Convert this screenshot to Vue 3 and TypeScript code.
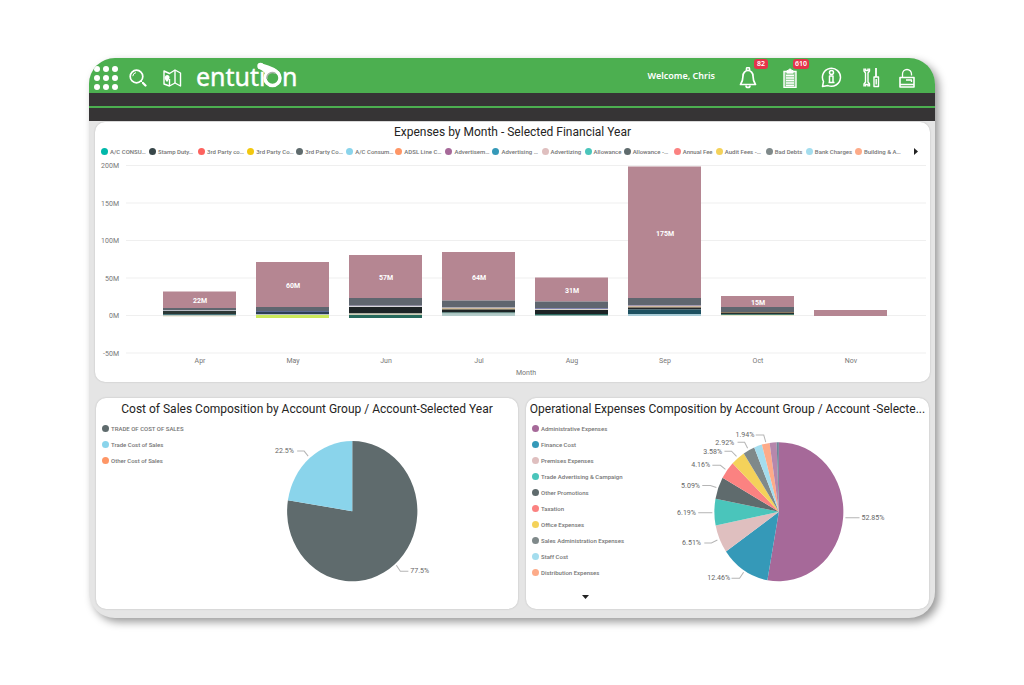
<script setup lang="ts">
interface Item { label: string; color: string }
interface Segment { color: string; top: number; height: number }
interface Bar { month: string; label: string; labelY: number; segments: Segment[] }
interface Slice { value: number; color: string }
interface Callout { text: string; x: number; y: number; points: string }

const accounts: Item[] = [
  { label: 'A/C CONSU…', color: '#01b8aa' },
  { label: 'Stamp Duty…', color: '#374649' },
  { label: '3rd Party co…', color: '#fd625e' },
  { label: '3rd Party Co…', color: '#f2c80f' },
  { label: '3rd Party Co…', color: '#5f6b6d' },
  { label: 'A/C Consum…', color: '#8ad4eb' },
  { label: 'ADSL Line C…', color: '#fe9666' },
  { label: 'Advertisem…', color: '#a66999' },
  { label: 'Advertising …', color: '#3599b8' },
  { label: 'Advertizing', color: '#dfbfbf' },
  { label: 'Allowance', color: '#4ac5bb' },
  { label: 'Allowance -…', color: '#5f6b6d' },
  { label: 'Annual Fee', color: '#fb8281' },
  { label: 'Audit Fees -…', color: '#f4d25a' },
  { label: 'Bad Debts', color: '#7f898a' },
  { label: 'Bank Charges', color: '#a4ddee' },
  { label: 'Building & A…', color: '#fdab89' },
]

const salesGroups: Item[] = [
  { label: 'TRADE OF COST OF SALES', color: '#5f6b6d' },
  { label: 'Trade Cost of Sales', color: '#8ad4eb' },
  { label: 'Other Cost of Sales', color: '#fe9666' },
]

const expenseGroups: Item[] = [
  { label: 'Administrative Expenses', color: '#a66999' },
  { label: 'Finance Cost', color: '#3599b8' },
  { label: 'Premises Expenses', color: '#dfbfbf' },
  { label: 'Trade Advertising & Campaign', color: '#4ac5bb' },
  { label: 'Other Promotions', color: '#5f6b6d' },
  { label: 'Taxation', color: '#fb8281' },
  { label: 'Office Expenses', color: '#f4d25a' },
  { label: 'Sales Administration Expenses', color: '#7f898a' },
  { label: 'Staff Cost', color: '#a4ddee' },
  { label: 'Distribution Expenses', color: '#fdab89' },
]

const ticks = ['200M', '150M', '100M', '50M', '0M', '-50M']
const tickY = (i: number) => 9.5 + i * 37.5

const stack = (top: number, parts: [string, number][]): Segment[] => {
  let y = top
  return parts.map(([color, height]) => {
    const s = { color, top: y, height }
    y += height
    return s
  })
}

const rose = '#b58692'
const slate = '#5f666f'
const bars: Bar[] = [
  { month: 'Apr', label: '22M', labelY: 144, segments: stack(135.5, [[rose, 16.5], [slate, 2], ['#b9bcc4', 1], ['#2c3836', 3], ['#49757a', 1.5], ['#e6dfc8', 1]]) },
  { month: 'May', label: '60M', labelY: 129, segments: stack(106, [[rose, 45], [slate, 4], ['#5b6a93', 1], ['#2c3f55', 2], ['#b9c2c6', 1], ['#cbe95a', 3]]) },
  { month: 'Jun', label: '57M', labelY: 121, segments: stack(99, [[rose, 43], [slate, 7], ['#8d8ca0', 1], ['#d8d8dc', 1], ['#1d2426', 6.5], ['#cdd0b8', 1.5], ['#276a5d', 3]]) },
  { month: 'Jul', label: '64M', labelY: 121, segments: stack(96, [[rose, 48.5], [slate, 7], ['#a9a4b4', 1], ['#c8a45a', 1], ['#1d2426', 3], ['#3c7a70', 1], ['#b3cbc9', 2.5]]) },
  { month: 'Aug', label: '31M', labelY: 134, segments: stack(121.5, [[rose, 24], [slate, 6.5], ['#8084b0', 1], ['#d8d2c8', 1], ['#1d2426', 4], ['#2c6a60', 1.5]]) },
  { month: 'Sep', label: '175M', labelY: 77, segments: stack(10.5, [[rose, 131.5], [slate, 7.5], ['#9a86b0', 1], ['#d6b070', 1], ['#24282b', 2], ['#1d5060', 4.5], ['#a8cbd6', 2]]) },
  { month: 'Oct', label: '15M', labelY: 146, segments: stack(140, [[rose, 11], [slate, 5], ['#8d7a60', 1], ['#26302f', 1], ['#4d8274', 1], ['#e6e6cc', 1]]) },
  { month: 'Nov', label: '', labelY: 0, segments: stack(154, [[rose, 6]]) },
]
const barX = (i: number) => 68 + i * 93

const wedges = (slices: Slice[], cx: number, cy: number, rx: number, ry: number) => {
  const total = slices.reduce((sum, s) => sum + s.value, 0)
  let turn = 0
  const at = (t: number) => {
    const a = t * 2 * Math.PI
    return `${(cx + rx * Math.sin(a)).toFixed(2)} ${(cy - ry * Math.cos(a)).toFixed(2)}`
  }
  return slices.map((s) => {
    const from = turn
    turn += s.value / total
    const large = turn - from > 0.5 ? 1 : 0
    return { color: s.color, d: `M${cx} ${cy}L${at(from)}A${rx} ${ry} 0 ${large} 1 ${at(turn)}Z` }
  })
}

const salesPie = wedges([{ value: 77.5, color: '#5f6b6d' }, { value: 22.5, color: '#8ad4eb' }], 120, 91, 65, 70)
const salesCallouts: Callout[] = [
  { text: '22.5%', x: 43, y: 33, points: '65,31 72,31 76,36' },
  { text: '77.5%', x: 178, y: 153, points: '164,145 168,151 176,151' },
]

const expensePie = wedges([
  { value: 52.85, color: '#a66999' },
  { value: 12.46, color: '#3599b8' },
  { value: 6.51, color: '#dfbfbf' },
  { value: 6.19, color: '#4ac5bb' },
  { value: 5.09, color: '#5f6b6d' },
  { value: 4.16, color: '#fb8281' },
  { value: 3.58, color: '#f4d25a' },
  { value: 2.92, color: '#7f898a' },
  { value: 2, color: '#a4ddee' },
  { value: 1.94, color: '#fdab89' },
  { value: 1.75, color: '#b687ac' },
  { value: 0.55, color: '#6e8598' },
], 110, 91, 64, 69)
const expenseCallouts: Callout[] = [
  { text: '1.94%', x: 67, y: 17, points: '87,15 95,15 97,22' },
  { text: '2.92%', x: 47, y: 25, points: '69,22 76,22 79,28' },
  { text: '3.58%', x: 35, y: 34, points: '56,31 63,31 68,36' },
  { text: '4.16%', x: 23, y: 47, points: '44,45 52,45 57,49' },
  { text: '5.09%', x: 13, y: 67, points: '34,65 42,65 48,67' },
  { text: '6.19%', x: 9, y: 94, points: '30,92 44,92' },
  { text: '6.51%', x: 14, y: 124, points: '36,122 43,122 49,119' },
  { text: '12.46%', x: 39, y: 159, points: '63,157 71,157 75,151' },
  { text: '52.85%', x: 192, y: 99, points: '176,97 190,97' },
]
</script>

<template>
  <div class="page">
    <div class="frame">
      <header class="topbar">
        <button class="icon apps" aria-label="Apps">
          <svg width="26" height="26" viewBox="0 0 26 26">
            <g v-for="r in 3" :key="r">
              <circle v-for="c in 3" :key="c" :cx="c * 9 - 5" :cy="r * 9 - 5" r="3" fill="#fff" />
            </g>
          </svg>
        </button>
        <button class="icon search" aria-label="Search">
          <svg width="18" height="18" viewBox="0 0 18 18" fill="none" stroke="#fff">
            <circle cx="7.5" cy="7.5" r="6.3" stroke-width="1.7" />
            <path d="M3.8 7.2A4 4 0 0 1 7 3.6M12 12l2 2" stroke-width="1" />
            <path d="M14 14l2.500 2.500" stroke-width="2.2" stroke-linecap="round" />
          </svg>
        </button>
        <button class="icon map" aria-label="Map">
          <svg width="19" height="18" viewBox="0 0 19 18" fill="none" stroke="#fff" stroke-width="1.400" stroke-linejoin="round">
            <path d="M1 2L6.500 4.500L12 1L17.500 4V17L12 14L6.500 17L1 15Z" />
            <path d="M6.500 10v7M12 1v13" />
            <path d="M4 12C2.500 10 2 9 2.500 8a1.800 1.800 0 0 1 3.400 0c.3 1-.4 2-1.900 4z" fill="#fff" />
          </svg>
        </button>
        <svg class="logo" width="106" height="40" viewBox="0 -4 106 40" role="img" aria-label="entution">
          <text x="0" y="26" class="wordmark">entutı</text>
          <text x="86" y="26" class="wordmark">n</text>
          <path d="M62 8.500Q67 10 69.500 14L84 13Q80 7 66 3.500Z" fill="#fff" />
          <circle cx="64.500" cy="6" r="3.200" fill="#fff" />
          <circle cx="76.500" cy="18" r="7.500" fill="#4caf50" stroke="#fff" stroke-width="3.500" />
          <path d="M71 19A5.500 5.500 0 0 1 79.500 13.500" fill="none" stroke="#a9b5aa" stroke-width="1.500" />
        </svg>
        <span class="welcome">Welcome, Chris</span>
        <nav class="tools">
          <button class="icon" aria-label="Notifications">
            <svg width="18" height="22" viewBox="0 0 18 22" fill="none" stroke="#fff" stroke-width="1.700" stroke-linejoin="round">
              <path d="M1.500 17.500Q4 14 4 9a5 5.500 0 0 1 10 0Q14 14 16.500 17.500z" />
              <path d="M7.500 3.500V2a1.500 1.500 0 0 1 3 0v1.500M7 18.500a2 2 0 0 0 4 0" />
            </svg>
            <span class="badge">82</span>
          </button>
          <button class="icon" aria-label="Tasks">
            <svg width="14" height="20" viewBox="0 0 14 20">
              <path d="M1 3.500H13V19.500H1z" fill="#fff" fill-opacity=".35" stroke="#fff" stroke-width="1.400" />
              <path d="M4 5V2.500H5.500a1.500 1.500 0 0 1 3 0H10V5z" fill="#fff" stroke="#fff" />
              <path d="M3 7.500h8M3 10h8M3 12.500h8M3 15h8M3 17.500h8" stroke="#fff" stroke-width="1.300" />
            </svg>
            <span class="badge wide">610</span>
          </button>
          <button class="icon" aria-label="Information">
            <svg width="21" height="21" viewBox="0 0 21 21" fill="none" stroke="#fff" stroke-width="1.500" stroke-linejoin="round">
              <path d="M1.500 19.500l1-5A9 9 0 1 1 7 18.600z" />
              <circle cx="10.500" cy="5.500" r="2" />
              <path d="M8.500 9H12v6.500H8.500zM7.500 15.500h6" />
            </svg>
          </button>
          <button class="icon" aria-label="Settings">
            <svg width="17" height="21" viewBox="0 0 17 21" fill="none" stroke="#fff" stroke-width="1.400" stroke-linejoin="round">
              <path d="M1 1.500V4l1.500 2v9L1 17v2.500M6.500 1.500V4L5 6v9l1.500 2v2.500M2.500 1.500v2h2.500v-2M2.500 19.500v-2H5v2" />
              <path d="M13 1v9" stroke-width="1.800" />
              <path d="M11 10h4.500v9.500H11zM13.200 12v5.500" />
            </svg>
          </button>
          <button class="icon" aria-label="Unlock">
            <svg width="16" height="20" viewBox="0 0 16 20" fill="none" stroke="#fff" stroke-width="1.600" stroke-linejoin="round">
              <path d="M1 9.500h14V19H1z" />
              <path d="M3.500 9V6a4.500 4.500 0 0 1 9 0v1.500M1 16.500h14M7 12h5.500v2" stroke-width="1.300" />
            </svg>
          </button>
        </nav>
      </header>
      <div class="strip"></div>

      <main class="board">
        <section class="card monthly">
          <h2>Expenses by Month - Selected Financial Year</h2>
          <div class="legend-row">
            <ul>
              <li v-for="(a, i) in accounts" :key="i">
                <svg class="dot" viewBox="0 0 6 6"><circle cx="3" cy="3" r="3" :fill="a.color" /></svg>{{ a.label }}
              </li>
            </ul>
            <button class="pager" aria-label="Next accounts">
              <svg width="4" height="7" viewBox="0 0 4 7"><path d="M0 0L4 3.500L0 7z" fill="#222" /></svg>
            </button>
          </div>
          <svg class="chart" viewBox="0 4 835 222" role="img" aria-label="Expenses by month">
            <g v-for="(t, i) in ticks" :key="t">
              <line x1="31" x2="831" :y1="tickY(i)" :y2="tickY(i)" stroke="#efefef" />
              <text x="24" :y="tickY(i) + 2.5" class="axis end">{{ t }}</text>
            </g>
            <g v-for="(b, i) in bars" :key="b.month">
              <rect v-for="(s, k) in b.segments" :key="k" :x="barX(i)" :y="s.top" width="73" :height="s.height" :fill="s.color" />
              <text :x="barX(i) + 37" :y="b.labelY + 2.5" class="value">{{ b.label }}</text>
              <text :x="barX(i) + 37" y="207" class="axis mid">{{ b.month }}</text>
            </g>
            <text x="431" y="219" class="axis mid">Month</text>
          </svg>
        </section>

        <div class="pair">
          <section class="card sales">
            <h2>Cost of Sales Composition by Account Group / Account-Selected Year</h2>
            <div class="split">
              <ul class="legend-col">
                <li v-for="g in salesGroups" :key="g.label">
                  <svg class="dot" viewBox="0 0 6 6"><circle cx="3" cy="3" r="3" :fill="g.color" /></svg>{{ g.label }}
                </li>
              </ul>
              <svg class="pie" viewBox="0 0 240 180" role="img" aria-label="Cost of sales composition">
                <path v-for="(w, i) in salesPie" :key="i" :d="w.d" :fill="w.color" />
                <g v-for="c in salesCallouts" :key="c.text">
                  <polyline :points="c.points" class="leader" />
                  <text :x="c.x" :y="c.y" class="percent">{{ c.text }}</text>
                </g>
              </svg>
            </div>
          </section>

          <section class="card expenses">
            <h2>Operational Expenses Composition by Account Group / Account -Selecte...</h2>
            <div class="split">
              <div class="legend-side">
                <ul class="legend-col">
                  <li v-for="g in expenseGroups" :key="g.label">
                    <svg class="dot" viewBox="0 0 6 6"><circle cx="3" cy="3" r="3" :fill="g.color" /></svg>{{ g.label }}
                  </li>
                </ul>
                <button class="pager" aria-label="More groups">
                  <svg width="7" height="4" viewBox="0 0 7 4"><path d="M0 0H7L3.500 4z" fill="#222" /></svg>
                </button>
              </div>
              <svg class="pie" viewBox="0 0 240 180" role="img" aria-label="Operational expenses composition">
                <path v-for="(w, i) in expensePie" :key="i" :d="w.d" :fill="w.color" />
                <g v-for="c in expenseCallouts" :key="c.text">
                  <polyline :points="c.points" class="leader" />
                  <text :x="c.x" :y="c.y" class="percent">{{ c.text }}</text>
                </g>
              </svg>
            </div>
          </section>
        </div>
      </main>
    </div>
  </div>
</template>

<style>
body {
  background: #fff;
}
</style>

<style scoped>
.page {
  padding: 58px 89px 67px;
  font-family: Roboto, "Liberation Sans", sans-serif;
  color: #333;
}
.frame {
  border-radius: 26px;
  overflow: hidden;
  background: #e5e5e5;
  box-shadow: 4px 4px 8px rgba(0, 0, 0, 0.4);
}
.topbar {
  display: flex;
  align-items: center;
  height: 35px;
  padding: 0 12px 0 4px;
  background: #4caf50;
}
button {
  border: 0;
  padding: 0;
  background: none;
  display: flex;
  align-items: center;
  font-family: inherit;
}
.icon {
  position: relative;
}
.icon svg {
  display: block;
}
.apps {
  margin-top: 4px;
}
.search {
  margin: 4px 0 0 10px;
}
.map {
  margin: 4px 0 0 16px;
}
.logo {
  margin-left: 14px;
}
.wordmark {
  font-family: "Noto Sans", sans-serif;
  font-size: 25px;
  fill: #fff;
  stroke: #fff;
  stroke-width: 0.4;
}
.welcome {
  margin-left: auto;
  font-family: "Noto Sans", sans-serif;
  font-size: 9px;
  font-weight: 600;
  color: #fff;
}
.tools {
  display: grid;
  grid-template-columns: 42px 42px 41px 39px 32px;
  justify-items: center;
  align-items: center;
  margin: 4px 0 0 12px;
}
.badge {
  position: absolute;
  top: -8px;
  left: 15px;
  padding: 0 3px;
  border-radius: 3px;
  background: #e5344a;
  color: #fff;
  font-family: "Noto Sans", sans-serif;
  font-size: 7px;
  font-weight: 600;
  line-height: 10px;
}
.badge.wide {
  top: -9px;
  left: 10px;
  padding: 0 2px;
}
.strip {
  height: 28px;
  background: linear-gradient(#4caf50, #4caf50) 0 13px / 100% 2px no-repeat #363435;
}
.board {
  padding: 1px 5px 9px 6px;
}
.card {
  background: #fff;
  border-radius: 10px;
  box-shadow: 0 0 2px rgba(0, 0, 0, 0.2);
}
h2 {
  margin: 0;
  font-size: 12px;
  font-weight: 400;
  line-height: 20px;
  text-align: center;
  white-space: nowrap;
  color: #252423;
}
ul {
  margin: 0;
  padding: 0;
  list-style: none;
}
li {
  display: flex;
  align-items: center;
  gap: 2px;
  font-size: 6px;
  font-weight: 500;
  white-space: nowrap;
  color: #757575;
}
.dot {
  flex: none;
  width: 7px;
  height: 7px;
}
.legend-row {
  display: flex;
  align-items: center;
  justify-content: space-between;
  height: 18px;
  padding: 0 12px 0 6px;
}
.legend-row ul {
  flex: 1;
  display: grid;
  grid-template-columns: 48fr 49fr 49fr 49fr 50fr 49fr 50fr 47fr 49fr 43fr 39fr 50fr 42fr 50fr 40fr 49fr 59fr;
}
.chart {
  display: block;
  width: 100%;
}
.axis {
  font-size: 7px;
  fill: #777;
}
.end {
  text-anchor: end;
}
.mid {
  text-anchor: middle;
}
.value {
  font-size: 7px;
  font-weight: 700;
  fill: #fff;
  text-anchor: middle;
}
.pair {
  display: grid;
  grid-template-columns: 422fr 403fr;
  gap: 8px;
  margin: 16px 1px 0;
}
.pair .card {
  min-height: 211px;
}
.pair h2 {
  line-height: 22px;
}
.split {
  display: flex;
  justify-content: space-between;
  align-items: flex-start;
  padding: 0 19px 0 6px;
}
.sales .split {
  padding-right: 46px;
}
.legend-col li {
  height: 16px;
}
.legend-side {
  display: flex;
  flex-direction: column;
}
.legend-side .pager {
  align-self: center;
  margin: 15px 0 0 14px;
}
.pie {
  flex: none;
  width: 64%;
  overflow: visible;
}
.sales .pie {
  width: 65%;
}
.leader {
  fill: none;
  stroke: #b5b5b5;
}
.percent {
  font-size: 7px;
  fill: #666;
}
</style>
